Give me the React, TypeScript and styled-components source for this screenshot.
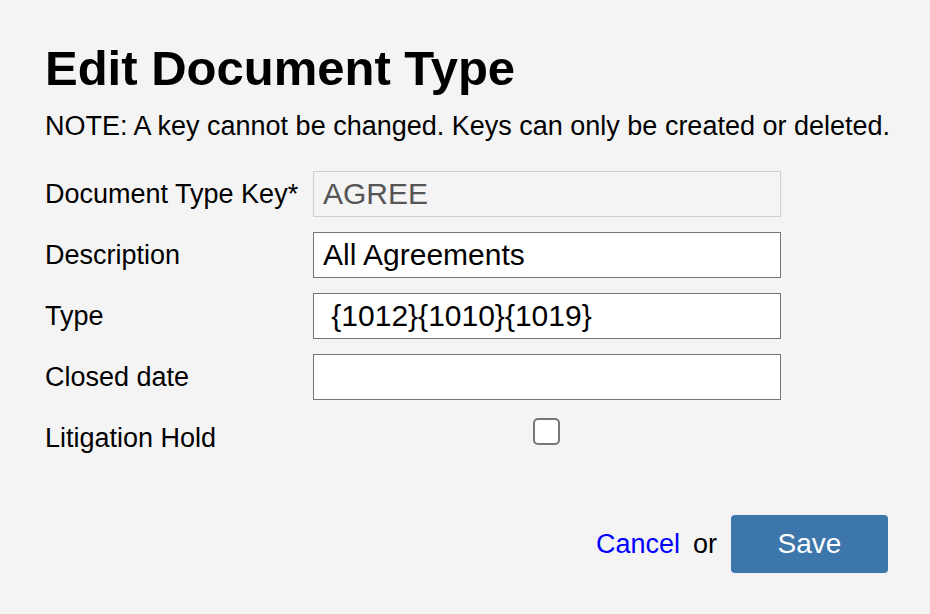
import styled, { createGlobalStyle } from 'styled-components'

const GlobalStyle = createGlobalStyle`
  html, body {
    margin: 0;
    padding: 0;
    background: #f4f4f4;
  }
  body {
    font-family: 'Liberation Sans', Arial, sans-serif;
    color: #000;
  }
`

export default function App() {
  return (
    <>
      <GlobalStyle />
      <Page>
        <Title>Edit Document Type</Title>
        <Note>NOTE: A key cannot be changed. Keys can only be created or deleted.</Note>
        <Form>
          <Row>
            <Label>Document Type Key*</Label>
            <Input readOnly defaultValue='AGREE' />
          </Row>
          <Row>
            <Label>Description</Label>
            <Input defaultValue='All Agreements' />
          </Row>
          <Row>
            <Label>Type</Label>
            <Input defaultValue=' {1012}{1010}{1019}' />
          </Row>
          <Row>
            <Label>Closed date</Label>
            <Input defaultValue='' />
          </Row>
          <Row>
            <Label>Litigation Hold</Label>
            <CheckCell>
              <Checkbox type='checkbox' />
            </CheckCell>
          </Row>
        </Form>
        <Actions>
          <CancelLink href='#'>Cancel</CancelLink>
          <Or>or</Or>
          <SaveButton>Save</SaveButton>
        </Actions>
      </Page>
    </>
  )
}

const Page = styled.div`
  width: 843px;
  padding: 39px 0 0 45px;
`

const Title = styled.h1`
  margin: 0;
  font-size: 49px;
  line-height: 58px;
  font-weight: bold;
`

const Note = styled.p`
  margin: 13px 0 0 0;
  font-size: 27px;
  line-height: 32px;
  white-space: nowrap;
`

const Form = styled.div`
  display: flex;
  flex-direction: column;
  gap: 15px;
  margin-top: 29px;
`

const Row = styled.div`
  display: grid;
  grid-template-columns: 268px 468px;
  align-items: center;
  min-height: 46px;
`

const Label = styled.label`
  font-size: 27px;
  white-space: nowrap;
`

const Input = styled.input`
  box-sizing: border-box;
  width: 468px;
  height: 46px;
  padding: 0 9px;
  font-family: 'Liberation Sans', Arial, sans-serif;
  font-size: 30px;
  color: #000;
  background: #fff;
  border: 1px solid #767676;
  border-radius: 0;
  outline: none;
  &:read-only {
    background: #f4f4f4;
    border-color: #cfcfcf;
    color: #555;
  }
`

const CheckCell = styled.div`
  display: flex;
  justify-content: center;
  padding: 0 2px 14px 0;
`

const Checkbox = styled.input`
  appearance: none;
  box-sizing: border-box;
  width: 27px;
  height: 27px;
  margin: 0;
  background: #fff;
  border: 2px solid #767676;
  border-radius: 5px;
`

const Actions = styled.div`
  display: flex;
  align-items: center;
  justify-content: flex-end;
  margin-top: 54px;
  font-size: 27px;
`

const CancelLink = styled.a`
  color: #0000ff;
  text-decoration: none;
`

const Or = styled.span`
  margin: 0 14px 0 13px;
`

const SaveButton = styled.button`
  width: 157px;
  height: 58px;
  border: none;
  border-radius: 4px;
  background: #3d76ab;
  color: #fff;
  font-family: 'Liberation Sans', Arial, sans-serif;
  font-size: 28px;
`
